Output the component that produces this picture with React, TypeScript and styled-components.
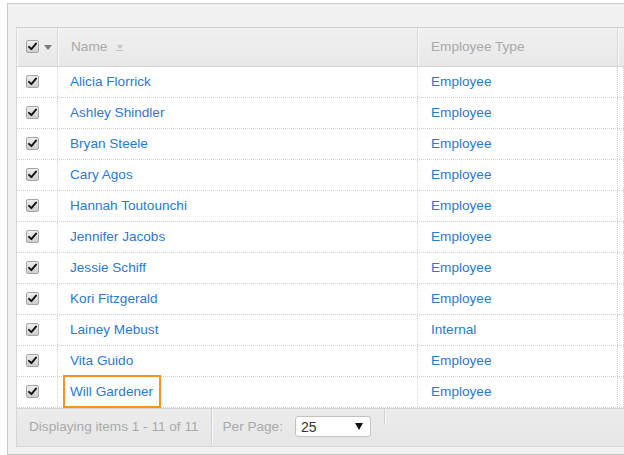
import React from 'react';
import styled, { createGlobalStyle } from 'styled-components';

const GlobalStyle = createGlobalStyle`
  html, body {
    margin: 0;
    padding: 0;
    background: #ffffff;
    overflow: hidden;
    font-family: "Liberation Sans", Arial, sans-serif;
  }
`;

const people = [
  { name: 'Alicia Florrick', type: 'Employee' },
  { name: 'Ashley Shindler', type: 'Employee' },
  { name: 'Bryan Steele', type: 'Employee' },
  { name: 'Cary Agos', type: 'Employee' },
  { name: 'Hannah Toutounchi', type: 'Employee' },
  { name: 'Jennifer Jacobs', type: 'Employee' },
  { name: 'Jessie Schiff', type: 'Employee' },
  { name: 'Kori Fitzgerald', type: 'Employee' },
  { name: 'Lainey Mebust', type: 'Internal' },
  { name: 'Vita Guido', type: 'Employee' },
  { name: 'Will Gardener', type: 'Employee', focused: true },
];

const COLS = '41px 360px 200px 1fr';
const FONT = '13.6px';

const Frame = styled.div`
  box-sizing: border-box;
  margin: 3px 0 0 7px;
  width: calc(100vw - 7px);
  overflow: hidden;
  border: 1px solid #c9c9c9;
  border-right: none;
  background: #f1f1f1;
  padding: 23px 0 7px 8px;
`;

const Grid = styled.div`
  background: #fff;
  border-top: 1px solid #cfcfcf;
  border-left: 1px solid #d6d6d6;
`;

const HeaderRow = styled.div`
  display: grid;
  grid-template-columns: ${COLS};
  height: 38px;
  background: linear-gradient(#f0f0f0, #e8e8e8);
  border-bottom: 1px solid #d4d4d4;
`;

const HeadCell = styled.div`
  display: flex;
  align-items: center;
  gap: 5px;
  padding-left: ${p => p.$pad}px;
  padding-bottom: 1px;
  border-right: 1px solid #d6d6d6;
  box-shadow: inset 1px 0 0 #fafafa;
  color: #a9a9a9;
  font-size: ${FONT};
`;

const Row = styled.div`
  display: grid;
  grid-template-columns: ${COLS};
  height: 30px;
  border-bottom: 1px dotted #cfcfcf;
`;

const Cell = styled.div`
  display: flex;
  align-items: center;
  padding-left: ${p => p.$pad}px;
  padding-bottom: 1px;
  border-right: 1px dotted #d4d4d4;
  font-size: ${FONT};
`;

const Link = styled.span`
  color: #2b79cf;
  padding: 7px 6px 7px 5px;
  margin: -3px 0 -3px -7px;
  border: 2px solid ${p => (p.$focused ? '#f7941d' : 'transparent')};
  position: relative;
  z-index: 1;
`;

const Type = styled.span`
  color: #2b79cf;
`;

const Box = styled.span`
  display: inline-flex;
  align-items: center;
  justify-content: center;
  width: 11px;
  height: 11px;
  border: 1px solid #a5a5a5;
  border-radius: 2px;
  background: linear-gradient(#eeeeee, #cdcdcd);
`;

const Caret = styled.span`
  width: 0;
  height: 0;
  border-left: 4px solid transparent;
  border-right: 4px solid transparent;
  border-top: 5px solid #7a7a7a;
  margin-top: 1px;
`;

const SortIcon = styled.span`
  display: inline-flex;
  flex-direction: column;
  align-items: center;
  gap: 1px;
  margin-left: 4px;
  margin-top: 3px;
  &::before {
    content: '';
    border-left: 3px solid transparent;
    border-right: 3px solid transparent;
    border-top: 4px solid #c4c4c4;
  }
  &::after {
    content: '';
    width: 7px;
    height: 1px;
    background: #c4c4c4;
  }
`;

const Footer = styled.div`
  display: flex;
  align-items: stretch;
  height: 37px;
  background: linear-gradient(#ececec, #e6e6e6);
  border-top: 1px solid #d2d2d2;
  border-bottom: 1px solid #d8d8d8;
  color: #a9a9a9;
  font-size: ${FONT};
`;

const FooterText = styled.div`
  display: flex;
  align-items: center;
  padding: 0 12px 2px 12px;
  border-right: 1px solid #d0d0d0;
  box-shadow: 1px 0 0 #f8f8f8;
`;

const PerPage = styled.div`
  display: flex;
  align-items: center;
  gap: 12px;
  padding: 0 13px 2px 11px;
`;

const Select = styled.div`
  display: flex;
  align-items: center;
  justify-content: space-between;
  box-sizing: border-box;
  width: 76px;
  height: 21px;
  padding: 0 7px 0 5px;
  background: #fff;
  border: 1px solid #c2c2c2;
  border-radius: 3px;
  color: #333;
  font-size: 14px;
`;

const SelectArrow = styled.span`
  width: 0;
  height: 0;
  border-left: 4px solid transparent;
  border-right: 4px solid transparent;
  border-top: 7px solid #111;
`;

const ShortDivider = styled.div`
  width: 1px;
  height: 15px;
  background: #d0d0d0;
  box-shadow: 1px 0 0 #f8f8f8;
`;

const Check: React.FC = () => (
  <Box>
    <svg width="9" height="9" viewBox="0 0 9 9">
      <path d="M1 4.8 L3.4 7.2 L8 1.6" fill="none" stroke="#111" strokeWidth="1.9" strokeLinecap="round" strokeLinejoin="round" />
    </svg>
  </Box>
);

export default function App() {
  return (
    <>
      <GlobalStyle />
      <Frame>
        <Grid>
          <HeaderRow>
            <HeadCell $pad={9}>
              <Check />
              <Caret />
            </HeadCell>
            <HeadCell $pad={13}>
              Name
              <SortIcon />
            </HeadCell>
            <HeadCell $pad={13}>Employee Type</HeadCell>
            <HeadCell $pad={13} />
          </HeaderRow>
          {people.map(p => (
            <Row key={p.name}>
              <Cell $pad={9}>
                <Check />
              </Cell>
              <Cell $pad={12}>
                <Link $focused={p.focused}>{p.name}</Link>
              </Cell>
              <Cell $pad={13}>
                <Type>{p.type}</Type>
              </Cell>
              <Cell $pad={0} />
            </Row>
          ))}
          <Footer>
            <FooterText>Displaying items 1 - 11 of 11</FooterText>
            <PerPage>
              Per Page:
              <Select>
                25
                <SelectArrow />
              </Select>
            </PerPage>
            <ShortDivider />
          </Footer>
        </Grid>
      </Frame>
    </>
  );
}
